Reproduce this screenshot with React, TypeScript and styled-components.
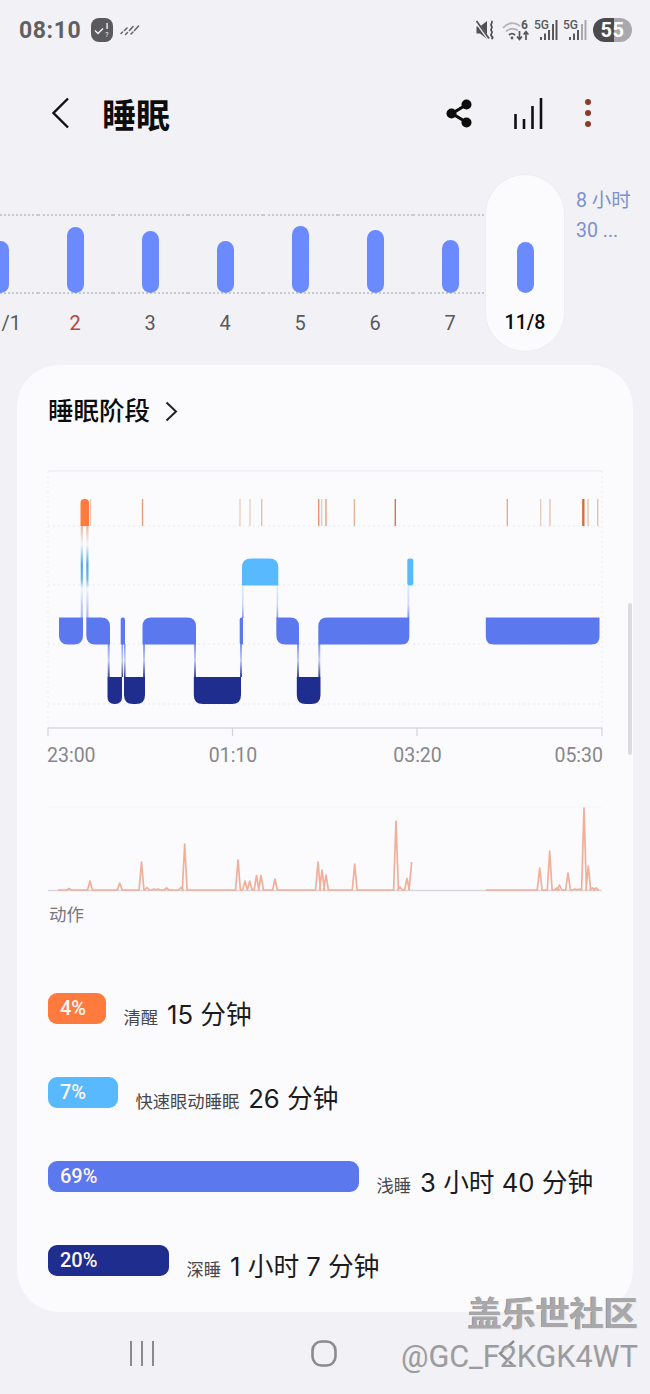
import React from "react";
import styled, { createGlobalStyle } from "styled-components";

const Global = createGlobalStyle`
  html, body { margin: 0; padding: 0; background: #f2f2f6; }
  body { font-family: Roboto, "Noto Sans CJK SC", sans-serif; }
`;

const Page = styled.div`
  position: relative;
  width: 650px;
  height: 1394px;
  overflow: hidden;
  background: #f2f2f6;
  display: flex;
  flex-direction: column;
`;

const StatusBar = styled.div`
  height: 58px;
  padding: 2px 18px 0 19px;
  box-sizing: border-box;
  display: flex;
  align-items: center;
`;
const Time = styled.span`
  font-size: 23px;
  font-weight: 700;
  letter-spacing: 0.6px;
  color: #606062;
`;
const StatusLeft = styled.div`
  display: flex;
  align-items: center;
  gap: 7px;
  margin-left: 10px;
`;
const StatusRight = styled.div`
  margin-left: auto;
  display: flex;
  align-items: center;
  gap: 5px;
`;
const Battery = styled.div`
  width: 39px;
  height: 24px;
  border-radius: 12px;
  background: linear-gradient(90deg, #4b4b4d 0 54%, #a9a9ad 54% 100%);
  color: #fff;
  font-size: 20px;
  font-weight: 700;
  line-height: 24px;
  text-align: center;
  letter-spacing: 0.5px;
  margin-left: 1px;
`;

const AppBar = styled.div`
  height: 110px;
  box-sizing: border-box;
  padding: 0 59px 0 52px;
  display: flex;
  align-items: center;
`;
const Title = styled.h1`
  margin: 5px 0 0 33px;
  font-size: 34px;
  line-height: 40px;
  font-weight: 700;
  color: #0c0c0c;
`;
const Actions = styled.div`
  margin-left: auto;
  display: flex;
  align-items: center;
  gap: 42px;
`;

const Strip = styled.div`
  margin: 7px 0 0 -37.5px;
  display: flex;
  height: 176px;
`;
const Day = styled.div`
  flex: 0 0 75px;
  padding-top: 39px;
  box-sizing: border-box;
  display: flex;
  flex-direction: column;
  align-items: stretch;
`;
const Plot = styled.div`
  height: 80px;
  box-sizing: border-box;
  border-top: 2px dotted #c9c9d4;
  border-bottom: 2px dotted #c9c9d4;
  display: flex;
  justify-content: center;
  align-items: flex-end;
`;
const Bar = styled.div<{ $h: number }>`
  width: 17px;
  height: ${(p) => p.$h}px;
  border-radius: 9px;
  background: #6a8afd;
  margin-bottom: -1px;
`;
const DayLabel = styled.div<{ $color?: string }>`
  margin-top: 17px;
  font-size: 20px;
  line-height: 24px;
  text-align: center;
  color: ${(p) => p.$color || "#59595c"};
`;
const SelectedDay = styled(Day)`
  flex: 0 0 78px;
  margin-left: -1.5px;
  background: #fbfbfd;
  border-radius: 39px;
  box-shadow: 0 0 0 1px #eeeef2;
  position: relative;
`;
const SelectedPlot = styled(Plot)`
  border-color: transparent;
`;
const SelectedLabel = styled(DayLabel)`
  color: #0c0c0c;
  font-weight: 500;
  font-size: 19.5px;
`;
const SideNote = styled.div`
  margin: 11px 0 0 12px;
  width: 60px;
  font-size: 19.5px;
  line-height: 30px;
  color: #7b91cf;
  white-space: nowrap;
`;

const Card = styled.section`
  margin: 14px 17px 0;
  height: 947px;
  box-sizing: border-box;
  background: #fbfbfe;
  border-radius: 42px;
  padding-top: 31px;
  display: flex;
  flex-direction: column;
`;
const CardHead = styled.div`
  display: flex;
  align-items: center;
  gap: 15px;
  height: 30px;
  padding-left: 31px;
`;
const CardTitle = styled.h2`
  margin: 0;
  font-size: 25.5px;
  line-height: 30px;
  font-weight: 500;
  color: #0c0c0c;
`;
const StageChart = styled.svg`
  display: block;
  margin-top: 39px;
`;
const MotionChart = styled.svg`
  display: block;
  margin-top: 30px;
`;
const AxisText = styled.text`
  font-family: Roboto, sans-serif;
  font-size: 19.5px;
  fill: #87878c;
`;
const MotionLabel = styled.div`
  margin: 3px 0 0 32px;
  font-size: 17.5px;
  line-height: 24px;
  color: #77777b;
`;
const Legend = styled.div`
  margin-top: 66px;
  padding-left: 31px;
  display: flex;
  flex-direction: column;
  gap: 42px;
`;
const Row = styled.div`
  height: 42px;
  display: flex;
  align-items: flex-start;
  gap: 17.5px;
`;
const Chip = styled.div<{ $w: number; $bg: string }>`
  width: ${(p) => p.$w}px;
  height: 31px;
  box-sizing: border-box;
  padding-left: 12px;
  border-radius: 9px;
  background: ${(p) => p.$bg};
  color: #fdf6f2;
  font-size: 20px;
  font-weight: 500;
  line-height: 30px;
`;
const RowText = styled.div`
  height: 42px;
  display: flex;
  align-items: baseline;
  gap: 9px;
  line-height: 44px;
  white-space: nowrap;
`;
const Stage = styled.span`
  font-size: 17.3px;
  color: #47474a;
`;
const Amount = styled.span`
  font-family: Inter, "Noto Sans CJK SC", sans-serif;
  font-size: 25.7px;
  font-weight: 400;
  color: #1b1b1d;
`;

const Nav = styled.nav`
  flex: 1;
  padding: 0 0 0 129px;
  display: flex;
  align-items: center;
  gap: 156px;
`;

const Scrollbar = styled.div`
  position: absolute;
  left: 628px;
  top: 603px;
  width: 4px;
  height: 152px;
  border-radius: 2px;
  background: #dcdce0;
`;
const Watermark = styled.div`
  position: absolute;
  right: 12px;
  top: 1293px;
  text-align: right;
  color: #a8a8aa;
  white-space: nowrap;
`;
const WatermarkCn = styled.div`
  font-size: 34px;
  line-height: 42px;
  font-weight: 700;
  text-shadow: 1px 1px 0 #e9e9ea, -1px 0 0 #939395;
`;
const WatermarkId = styled.div`
  margin-top: 3px;
  font-size: 30.5px;
  line-height: 38px;
  color: #9c9c9e;
  text-shadow: 1px 0 0 #e9e9ea;
`;

const days = [
  { label: "11/1", h: 52 },
  { label: "2", h: 66, color: "#b5483a" },
  { label: "3", h: 62 },
  { label: "4", h: 52 },
  { label: "5", h: 67 },
  { label: "6", h: 63 },
  { label: "7", h: 53 },
];

const rr = (x1: number, y1: number, x2: number, y2: number, [tl, tr, br, bl]: number[]) =>
  `M${x1 + tl} ${y1}H${x2 - tr}Q${x2} ${y1} ${x2} ${y1 + tr}V${y2 - br}Q${x2} ${y2} ${x2 - br} ${y2}H${x1 + bl}Q${x1} ${y2} ${x1} ${y2 - bl}V${y1 + tl}Q${x1} ${y1} ${x1 + tl} ${y1}Z`;

const AWAKE = "#ff7a3d";
const REM = "#58b9ff";
const LIGHT = "#5c78ee";
const DEEP = "#1f2d8f";

const blocks: { c: string; y: number; x1: number; x2: number; r: number[] }[] = [
  { c: AWAKE, y: 499, x1: 80.5, x2: 89, r: [4, 4, 0, 0] },
  { c: REM, y: 558.5, x1: 242, x2: 278.3, r: [9, 9, 0, 0] },
  { c: REM, y: 558.5, x1: 407.3, x2: 413.3, r: [2, 2, 2, 2] },
  { c: LIGHT, y: 617.5, x1: 59, x2: 83, r: [0, 0, 9, 9] },
  { c: LIGHT, y: 617.5, x1: 86.3, x2: 110, r: [0, 9, 0, 9] },
  { c: LIGHT, y: 617.5, x1: 120.7, x2: 125, r: [2, 2, 0, 0] },
  { c: LIGHT, y: 617.5, x1: 142.5, x2: 196, r: [9, 9, 0, 0] },
  { c: LIGHT, y: 617.5, x1: 239.7, x2: 243, r: [2, 0, 0, 2] },
  { c: LIGHT, y: 617.5, x1: 276.3, x2: 299, r: [0, 9, 0, 9] },
  { c: LIGHT, y: 617.5, x1: 318.3, x2: 409.3, r: [9, 0, 8, 0] },
  { c: LIGHT, y: 617.5, x1: 485.8, x2: 599.5, r: [0, 0, 8, 8] },
  { c: DEEP, y: 677, x1: 107.5, x2: 122, r: [0, 0, 7, 7] },
  { c: DEEP, y: 677, x1: 124, x2: 145, r: [0, 0, 9, 9] },
  { c: DEEP, y: 677, x1: 193.8, x2: 241, r: [0, 0, 9, 9] },
  { c: DEEP, y: 677, x1: 296.8, x2: 320.5, r: [0, 0, 9, 9] },
];

const links = [
  { g: "aw", x: 80.7, y: 526, h: 92, w: 2.2 },
  { g: "aw", x: 86.3, y: 526, h: 92, w: 2.2 },
  { g: "ld", x: 107.7, y: 644, h: 33, w: 2 },
  { g: "ld", x: 121.5, y: 644, h: 33, w: 1.6 },
  { g: "ld", x: 124, y: 644, h: 33, w: 1.6 },
  { g: "ld", x: 143, y: 644, h: 33, w: 2 },
  { g: "ld", x: 194, y: 644, h: 33, w: 2 },
  { g: "ld", x: 240, y: 644, h: 33, w: 2 },
  { g: "ld", x: 297, y: 644, h: 33, w: 2 },
  { g: "ld", x: 318.3, y: 644, h: 33, w: 2 },
  { g: "rl", x: 242, y: 585, h: 33, w: 1.6 },
  { g: "rl", x: 276.6, y: 585, h: 33, w: 1.6 },
  { g: "rl", x: 407.4, y: 585, h: 33, w: 2 },
];

const ticks = [
  { x: 90.5, c: "#e6c8b4" },
  { x: 142.5, c: "#e99a70" },
  { x: 240, c: "#e6cdbb" },
  { x: 250, c: "#e6cdbb" },
  { x: 261.7, c: "#e3bea6" },
  { x: 318.7, c: "#e98f60" },
  { x: 321.7, c: "#e6cdbb" },
  { x: 326, c: "#e99a70" },
  { x: 354.3, c: "#e9b08e" },
  { x: 395.3, c: "#db6c3c" },
  { x: 507.3, c: "#eaa57e" },
  { x: 540.7, c: "#e6cdbb" },
  { x: 550, c: "#e3bea6" },
  { x: 583.3, c: "#db6c3c", w: 2.4 },
  { x: 588, c: "#e3bea6" },
  { x: 597.7, c: "#e3bea6" },
];

const spikes = (start: number, end: number, peaks: number[][]) => {
  let d = `M${start} 890`;
  peaks.forEach(([x, y]) => {
    d += `L${x - 2.4} 890L${x} ${y}L${x + 2.4} 890`;
  });
  return d + `L${end} 890`;
};

const motionA = spikes(58, 409, [
  [69, 888.5], [90, 881], [119.7, 883], [141.5, 862], [147, 887.5], [154, 889], [158, 889],
  [166.5, 888], [181, 887.5], [184.7, 844], [238, 860], [245, 881], [249.7, 881], [256.5, 875.5],
  [261, 875.5], [275, 879], [318, 862], [322, 870], [326, 875], [354.7, 864], [396, 821],
  [400, 887], [407, 878.5],
]);
const motionB = spikes(486, 598, [
  [539.7, 868], [549.7, 851], [557, 888], [559.5, 885], [568, 873], [575, 889], [579, 889],
  [584, 808], [588.3, 866], [592.5, 888], [596, 888],
]);

const Mute = () => (
  <svg width="21" height="20" viewBox="0 0 21 20">
    <path d="M0.5 6.5h3.5L11 1v18L4 13.5H0.5z" fill="#515153" />
    <path d="M0 1.5 L12.5 19" stroke="#f2f2f6" strokeWidth="3" />
    <path d="M0.5 1 L13 18.5" stroke="#515153" strokeWidth="1.8" />
    <path d="M15.5 1c2.2 2-2.2 3 0 5s-2.2 3 0 5-2.2 3 0 5 1 2 0 3" fill="none" stroke="#515153" strokeWidth="1.8" />
  </svg>
);
const Wifi = () => (
  <svg width="27" height="22" viewBox="0 0 27 22">
    <path d="M1 9c5-6 12-6 17-2" fill="none" stroke="#b5b5b8" strokeWidth="1.8" />
    <path d="M4 12.5c4-3.5 8-3.5 12-1" fill="none" stroke="#b5b5b8" strokeWidth="1.8" />
    <path d="M7 16c2-1.8 4-1.8 6 0" fill="none" stroke="#58585a" strokeWidth="1.8" />
    <circle cx="10" cy="19" r="1.4" fill="#58585a" />
    <text x="19" y="9.5" fontFamily="Roboto, sans-serif" fontWeight="700" fontSize="12" fill="#58585a">6</text>
    <path d="M17.5 12v8M15 17.5l2.5 3 2.5-3" fill="none" stroke="#58585a" strokeWidth="1.7" />
    <path d="M24 21v-8M21.6 15.5l2.4-3 2.4 3" fill="none" stroke="#58585a" strokeWidth="1.7" />
  </svg>
);
const Signal = ({ faint }: { faint?: boolean }) => (
  <svg width="24" height="22" viewBox="0 0 24 22">
    <text x="0" y="10" fontFamily="Roboto, sans-serif" fontWeight="500" fontSize="12" fill="#58585a">5G</text>
    <rect x="6" y="18" width="2" height="3" fill="#58585a" />
    <rect x="10" y="14.5" width="2" height="6.5" fill="#58585a" />
    <rect x="14" y="11" width="2" height="10" fill="#58585a" />
    <rect x="18" y="5" width="2" height="16" fill={faint ? "#a9a9ad" : "#58585a"} />
    <rect x="21.5" y="1" width="2" height="20" fill={faint ? "#a9a9ad" : "#58585a"} />
  </svg>
);

export default function App() {
  return (
    <Page>
      <Global />
      <StatusBar>
        <Time>08:10</Time>
        <StatusLeft>
          <svg width="22" height="24" viewBox="0 0 22 24">
            <rect width="22" height="24" rx="8" fill="#5a5a5c" />
            <path d="M4 12.5l3 3 5-5" fill="none" stroke="#f2f2f6" strokeWidth="1.4" />
            <rect x="15.4" y="5" width="1.4" height="6" fill="#f2f2f6" />
            <text x="16" y="19" textAnchor="middle" fontFamily="Roboto, sans-serif" fontSize="7" fill="#f2f2f6">?</text>
          </svg>
          <svg width="20" height="12" viewBox="0 0 20 12">
            <path d="M1 9.5 2.5 8M4.5 6.5 7 4M5.5 10.5 7.5 8.5M9.5 6.5 13 2.5M11 10 13 8M14.5 6.5 18.5 2" stroke="#626264" strokeWidth="1.5" strokeLinecap="round" />
          </svg>
        </StatusLeft>
        <StatusRight>
          <Mute />
          <Wifi />
          <Signal />
          <Signal faint />
          <Battery>55</Battery>
        </StatusRight>
      </StatusBar>

      <AppBar>
        <svg width="17" height="32" viewBox="0 0 17 32">
          <path d="M16 1.5 1.5 16 16 30.5" fill="none" stroke="#111" strokeWidth="2.4" />
        </svg>
        <Title>睡眠</Title>
        <Actions>
          <svg width="26" height="29" viewBox="0 0 26 29">
            <path d="M20 6 6 14.5 20 23" fill="none" stroke="#0c0c0c" strokeWidth="3.2" />
            <circle cx="20.5" cy="5.5" r="5" fill="#0c0c0c" />
            <circle cx="5.5" cy="14.5" r="5" fill="#0c0c0c" />
            <circle cx="20.5" cy="23.5" r="5" fill="#0c0c0c" />
          </svg>
          <svg width="29" height="31" viewBox="0 0 29 31">
            <path d="M1.5 31V16M10 31V21M18.5 31V8M27 31V0" stroke="#111" strokeWidth="2.6" />
          </svg>
          <svg width="6" height="28" viewBox="0 0 6 28">
            <circle cx="3" cy="3" r="3" fill="#8b3a2a" />
            <circle cx="3" cy="14" r="3" fill="#8b3a2a" />
            <circle cx="3" cy="25" r="3" fill="#8b3a2a" />
          </svg>
        </Actions>
      </AppBar>

      <Strip>
        {days.map((d) => (
          <Day key={d.label}>
            <Plot>
              <Bar $h={d.h} />
            </Plot>
            <DayLabel $color={d.color}>{d.label}</DayLabel>
          </Day>
        ))}
        <SelectedDay>
          <SelectedPlot>
            <Bar $h={51} />
          </SelectedPlot>
          <SelectedLabel>11/8</SelectedLabel>
        </SelectedDay>
        <SideNote>
          8 小时
          <br />
          30 ...
        </SideNote>
      </Strip>

      <Card>
        <CardHead>
          <CardTitle>睡眠阶段</CardTitle>
          <svg width="13" height="21" viewBox="0 0 13 21">
            <path d="M1.5 1.5 11 10.5 1.5 19.5" fill="none" stroke="#222" strokeWidth="2" />
          </svg>
        </CardHead>

        <StageChart width="616" height="305" viewBox="17 465 616 305">
          <defs>
            <linearGradient id="aw" gradientUnits="userSpaceOnUse" x1="0" y1="526" x2="0" y2="618">
              <stop offset="0" stopColor="#e9b79c" />
              <stop offset="0.2" stopColor="#f2f4fa" />
              <stop offset="0.42" stopColor="#4aa9d8" />
              <stop offset="0.58" stopColor="#6bbbe6" />
              <stop offset="0.68" stopColor="#eef3fb" />
              <stop offset="1" stopColor="#a9b6ef" />
            </linearGradient>
            <linearGradient id="ld" gradientUnits="userSpaceOnUse" x1="0" y1="644" x2="0" y2="677">
              <stop offset="0" stopColor="#7f95ef" />
              <stop offset="0.5" stopColor="#c6cdf0" />
              <stop offset="1" stopColor="#3a479c" />
            </linearGradient>
            <linearGradient id="rl" gradientUnits="userSpaceOnUse" x1="0" y1="585" x2="0" y2="618">
              <stop offset="0" stopColor="#d9eefd" />
              <stop offset="0.6" stopColor="#cfd8f6" />
              <stop offset="1" stopColor="#8195ef" />
            </linearGradient>
          </defs>
          <path d="M48 471H602" stroke="#f0f0f4" strokeWidth="1.6" />
          {[526, 585, 644, 704].map((y) => (
            <path key={y} d={`M48 ${y}H602`} stroke="#e7e7ee" strokeWidth="1" strokeDasharray="2 3" />
          ))}
          <path d="M48 471V728M602 471V728" stroke="#ebebf1" strokeWidth="1" strokeDasharray="2 3" />
          {ticks.map((t) => (
            <rect key={t.x} x={t.x - (t.w || 1.3) / 2} y="499" width={t.w || 1.3} height="27" fill={t.c} />
          ))}
          {links.map((l) => (
            <rect key={l.x} x={l.x} y={l.y} width={l.w} height={l.h} fill={`url(#${l.g})`} />
          ))}
          {blocks.map((b) => (
            <path key={`${b.x1}-${b.y}`} d={rr(b.x1, b.y, b.x2, b.y + 27, b.r)} fill={b.c} />
          ))}
          <path d="M48 728H602" stroke="#d9d9e2" strokeWidth="1.6" />
          {[48, 232.5, 417, 602].map((x) => (
            <path key={x} d={`M${x} 728V736`} stroke="#d3d3da" strokeWidth="1.2" />
          ))}
          <AxisText x="47" y="762">23:00</AxisText>
          <AxisText x="233" y="762" textAnchor="middle">01:10</AxisText>
          <AxisText x="417.5" y="762" textAnchor="middle">03:20</AxisText>
          <AxisText x="603" y="762" textAnchor="end">05:30</AxisText>
        </StageChart>

        <MotionChart width="616" height="100" viewBox="17 800 616 100">
          <path d="M48 807H602" stroke="#f5f5f9" strokeWidth="1" />
          <path d="M48 890.5H602" stroke="#d6d6dc" strokeWidth="1.4" />
          <path d={motionA} fill="none" stroke="#f1af99" strokeWidth="1.7" strokeLinejoin="round" />
          <path d="M409 890 411.7 862" fill="none" stroke="#f1af99" strokeWidth="1.7" />
          <path d={motionB} fill="none" stroke="#f1af99" strokeWidth="1.7" strokeLinejoin="round" />
        </MotionChart>
        <MotionLabel>动作</MotionLabel>

        <Legend>
          <Row>
            <Chip $w={58} $bg="#ff7a3d">4%</Chip>
            <RowText>
              <Stage>清醒</Stage>
              <Amount>15 分钟</Amount>
            </RowText>
          </Row>
          <Row>
            <Chip $w={70} $bg="#58b9ff">7%</Chip>
            <RowText>
              <Stage>快速眼动睡眠</Stage>
              <Amount>26 分钟</Amount>
            </RowText>
          </Row>
          <Row>
            <Chip $w={311} $bg="#5c78ee">69%</Chip>
            <RowText>
              <Stage>浅睡</Stage>
              <Amount>3 小时 40 分钟</Amount>
            </RowText>
          </Row>
          <Row>
            <Chip $w={121} $bg="#1f2d8f">20%</Chip>
            <RowText>
              <Stage>深睡</Stage>
              <Amount>1 小时 7 分钟</Amount>
            </RowText>
          </Row>
        </Legend>
      </Card>

      <Nav>
        <svg width="26" height="27" viewBox="0 0 26 27">
          <path d="M2 1V26M13 1V26M24 1V26" stroke="#8b8b8d" strokeWidth="2" />
        </svg>
        <svg width="26" height="27" viewBox="0 0 26 27">
          <rect x="1.5" y="1.5" width="23" height="24" rx="9" fill="none" stroke="#8b8b8d" strokeWidth="2.6" />
        </svg>
        <svg width="26" height="27" viewBox="0 0 26 27">
          <path d="M21 1 7 13.5 21 26" fill="none" stroke="#8b8b8d" strokeWidth="2.4" />
        </svg>
      </Nav>

      <Scrollbar />
      <Watermark>
        <WatermarkCn>盖乐世社区</WatermarkCn>
        <WatermarkId>@GC_F2KGK4WT</WatermarkId>
      </Watermark>
    </Page>
  );
}
